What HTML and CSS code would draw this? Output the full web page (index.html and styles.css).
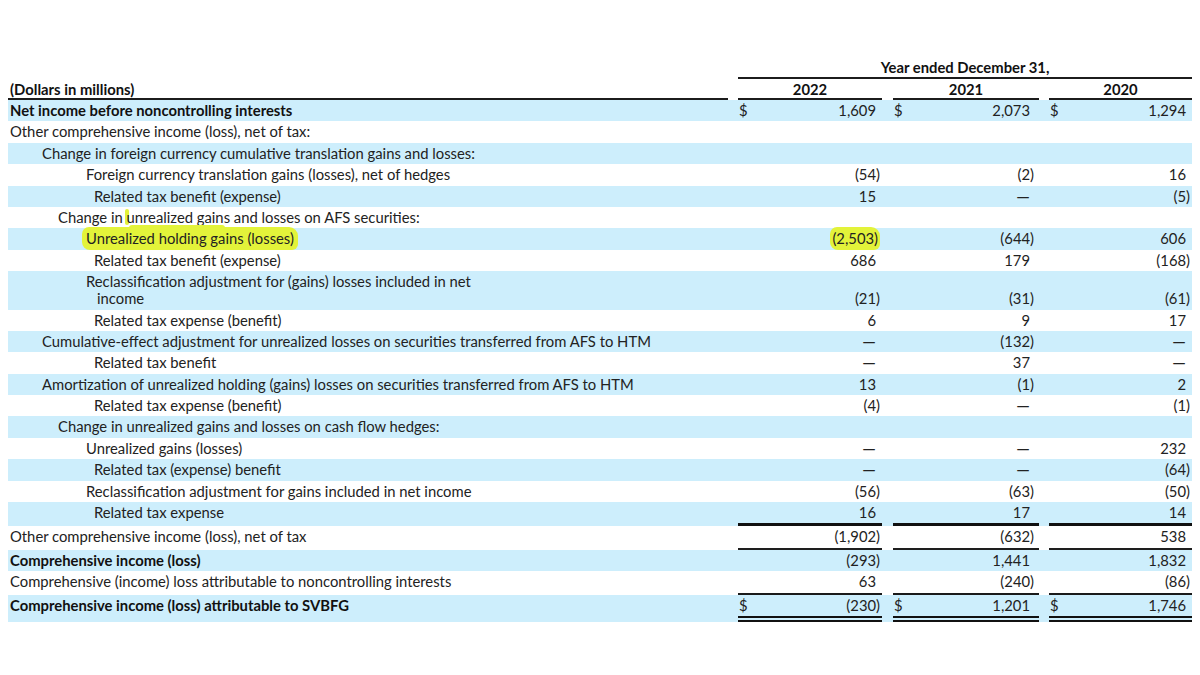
FILE: index.html
```html
<!DOCTYPE html>
<html lang="en">
<head>
<meta charset="utf-8">
<title>Comprehensive Income</title>
<link rel="stylesheet" href="styles.css">
</head>
<body>
<div class="page">
<table class="stmt">
<colgroup>
<col class="c-label"><col class="c-gap1"><col class="c-num1"><col class="c-gap2"><col class="c-num2"><col class="c-gap3"><col class="c-num3">
</colgroup>
<thead>
<tr class="h1"><td></td><td></td><td colspan="5" class="span-head ul">Year ended December 31,</td></tr>
<tr class="h2"><td class="lbl b ul">(Dollars in millions)</td><td></td><td class="yr ul">2022</td><td></td><td class="yr ul">2021</td><td></td><td class="yr ul">2020</td></tr>
</thead>
<tbody>
<tr class="band"><td class="lbl b">Net income before noncontrolling interests</td><td></td><td class="num n1"><span class="cur">$</span>1,609</td><td></td><td class="num n2"><span class="cur">$</span>2,073</td><td></td><td class="num n3"><span class="cur">$</span>1,294</td></tr>
<tr><td class="lbl">Other comprehensive income (loss), net of tax:</td><td></td><td class="num n1"></td><td></td><td class="num n2"></td><td></td><td class="num n3"></td></tr>
<tr class="band"><td class="lbl i1">Change in foreign currency cumulative translation gains and losses:</td><td></td><td class="num n1"></td><td></td><td class="num n2"></td><td></td><td class="num n3"></td></tr>
<tr><td class="lbl i2">Foreign currency translation gains (losses), net of hedges</td><td></td><td class="num n1">(54<span class="rp">)</span></td><td></td><td class="num n2">(2<span class="rp">)</span></td><td></td><td class="num n3">16</td></tr>
<tr class="band"><td class="lbl i3">Related tax benefit (expense)</td><td></td><td class="num n1">15</td><td></td><td class="num n2"><span class="dash">—</span></td><td></td><td class="num n3">(5<span class="rp">)</span></td></tr>
<tr><td class="lbl i15">Change in <span class="mark">unrealized</span> gains and losses on AFS securities:</td><td></td><td class="num n1"></td><td></td><td class="num n2"></td><td></td><td class="num n3"></td></tr>
<tr class="band"><td class="lbl i2"><span class="hl">Unrealized holding gains (losses)</span></td><td></td><td class="num n1"><span class="hl hl-num">(2,503)</span></td><td></td><td class="num n2">(644<span class="rp">)</span></td><td></td><td class="num n3">606</td></tr>
<tr><td class="lbl i3">Related tax benefit (expense)</td><td></td><td class="num n1">686</td><td></td><td class="num n2">179</td><td></td><td class="num n3">(168<span class="rp">)</span></td></tr>
<tr class="band tall"><td class="lbl i2 wrap">Reclassification adjustment for (gains) losses included in net<br><span class="cont">income</span></td><td></td><td class="num n1">(21<span class="rp">)</span></td><td></td><td class="num n2">(31<span class="rp">)</span></td><td></td><td class="num n3">(61<span class="rp">)</span></td></tr>
<tr><td class="lbl i3">Related tax expense (benefit)</td><td></td><td class="num n1">6</td><td></td><td class="num n2">9</td><td></td><td class="num n3">17</td></tr>
<tr class="band"><td class="lbl i1">Cumulative-effect adjustment for unrealized losses on securities transferred from AFS to HTM</td><td></td><td class="num n1"><span class="dash">—</span></td><td></td><td class="num n2">(132<span class="rp">)</span></td><td></td><td class="num n3"><span class="dash">—</span></td></tr>
<tr><td class="lbl i3">Related tax benefit</td><td></td><td class="num n1"><span class="dash">—</span></td><td></td><td class="num n2">37</td><td></td><td class="num n3"><span class="dash">—</span></td></tr>
<tr class="band"><td class="lbl i1">Amortization of unrealized holding (gains) losses on securities transferred from AFS to HTM</td><td></td><td class="num n1">13</td><td></td><td class="num n2">(1<span class="rp">)</span></td><td></td><td class="num n3">2</td></tr>
<tr><td class="lbl i3">Related tax expense (benefit)</td><td></td><td class="num n1">(4<span class="rp">)</span></td><td></td><td class="num n2"><span class="dash">—</span></td><td></td><td class="num n3">(1<span class="rp">)</span></td></tr>
<tr class="band"><td class="lbl i15">Change in unrealized gains and losses on cash flow hedges:</td><td></td><td class="num n1"></td><td></td><td class="num n2"></td><td></td><td class="num n3"></td></tr>
<tr><td class="lbl i2">Unrealized gains (losses)</td><td></td><td class="num n1"><span class="dash">—</span></td><td></td><td class="num n2"><span class="dash">—</span></td><td></td><td class="num n3">232</td></tr>
<tr class="band"><td class="lbl i3">Related tax (expense) benefit</td><td></td><td class="num n1"><span class="dash">—</span></td><td></td><td class="num n2"><span class="dash">—</span></td><td></td><td class="num n3">(64<span class="rp">)</span></td></tr>
<tr><td class="lbl i2">Reclassification adjustment for gains included in net income</td><td></td><td class="num n1">(56<span class="rp">)</span></td><td></td><td class="num n2">(63<span class="rp">)</span></td><td></td><td class="num n3">(50<span class="rp">)</span></td></tr>
<tr class="band"><td class="lbl i3">Related tax expense</td><td></td><td class="num n1 ul-thick">16</td><td></td><td class="num n2 ul-thick">17</td><td></td><td class="num n3 ul-thick">14</td></tr>
<tr><td class="lbl">Other comprehensive income (loss), net of tax</td><td></td><td class="num n1 ul-thin">(1,902<span class="rp">)</span></td><td></td><td class="num n2 ul-thin">(632<span class="rp">)</span></td><td></td><td class="num n3 ul-thin">538</td></tr>
<tr class="band"><td class="lbl b">Comprehensive income (loss)</td><td></td><td class="num n1">(293<span class="rp">)</span></td><td></td><td class="num n2">1,441</td><td></td><td class="num n3">1,832</td></tr>
<tr><td class="lbl">Comprehensive (income) loss attributable to noncontrolling interests</td><td></td><td class="num n1 ul-mid">63</td><td></td><td class="num n2 ul-mid">(240<span class="rp">)</span></td><td></td><td class="num n3 ul-mid">(86<span class="rp">)</span></td></tr>
<tr class="band"><td class="lbl b">Comprehensive income (loss) attributable to SVBFG</td><td></td><td class="num n1 ul-double"><span class="cur">$</span>(230<span class="rp">)</span></td><td></td><td class="num n2 ul-double"><span class="cur">$</span>1,201</td><td></td><td class="num n3 ul-double"><span class="cur">$</span>1,746</td></tr>
</tbody>
</table>
</div>
</body>
</html>
```

FILE: styles.css
```css
html {
  background: #ffffff;
}

html, body {
  margin: 0;
  padding: 0;
}

body {
  font-family: "Lato", "Open Sans", "Liberation Sans", sans-serif;
  font-size: 14.8px;
  color: #222222;
}

.page {
  padding: 57px 8px 0 8px;
}

.stmt {
  width: 1184px;
  border-collapse: separate;
  border-spacing: 0;
  table-layout: fixed;
}

.c-label { width: 720px; }
.c-gap1 { width: 10px; }
.c-num1 { width: 144px; }
.c-gap2 { width: 11px; }
.c-num2 { width: 146px; }
.c-gap3 { width: 10px; }
.c-num3 { width: 143px; }

.stmt td {
  padding: 2px 0 2.4px 0;
  line-height: 17px;
  height: 17px;
  white-space: nowrap;
  vertical-align: top;
}

.stmt thead td {
  vertical-align: bottom;
}

.h1 td {
  padding-bottom: 1px;
}

.h2 td {
  padding-bottom: 0;
}

.tall .num {
  vertical-align: bottom;
}

.span-head,
.yr {
  text-align: center;
  font-weight: 700;
  color: #111111;
}

.ul {
  border-bottom: 2px solid #1c1c1c;
}

.band td {
  background: #cdeefc;
}

.lbl {
  padding-left: 2px !important;
}

.b {
  font-weight: 700;
  color: #111111;
}

.i1 { padding-left: 34px !important; }
.i15 { padding-left: 50px !important; }
.i2 { padding-left: 78px !important; }
.i3 { padding-left: 86px !important; }

.wrap {
  white-space: normal !important;
}

.cont {
  padding-left: 11px;
}

.num {
  text-align: right;
  padding-right: 6px !important;
}

.n2 {
  padding-right: 9px !important;
}

.num .cur {
  float: left;
  padding-left: 1px;
}

.rp {
  margin-right: -4px;
}

.dash {
  font-weight: 700;
  display: inline-block;
  transform: scaleX(1.15);
  transform-origin: right center;
}

.ul-thick {
  border-bottom: 3px solid #111111;
}

.ul-thin {
  border-bottom: 2px solid #1e1e1e;
}

.ul-mid {
  border-bottom: 2px solid #1a1a1a;
}

.ul-double {
  border-bottom: 6px double #111111;
}

.hl {
  background: #e3f33a;
  border-radius: 7px 9px 6px 8px;
  padding: 2px 4px 3px 4px;
  margin: 0 -4px;
}

.hl-num {
  margin-right: -4px;
  padding: 2px 2px 3px;
}

.mark {
  position: relative;
}

.mark::before {
  content: "";
  position: absolute;
  left: -2px;
  top: 1px;
  width: 4px;
  height: 16px;
  background: #e3f33a;
  border-radius: 2px;
  z-index: -1;
}

.mark::after {
  content: "";
  position: absolute;
  left: 2px;
  bottom: -5px;
  width: 96px;
  height: 6px;
  background: #e3f33a;
  border-radius: 3px;
  z-index: 1;
}
```
